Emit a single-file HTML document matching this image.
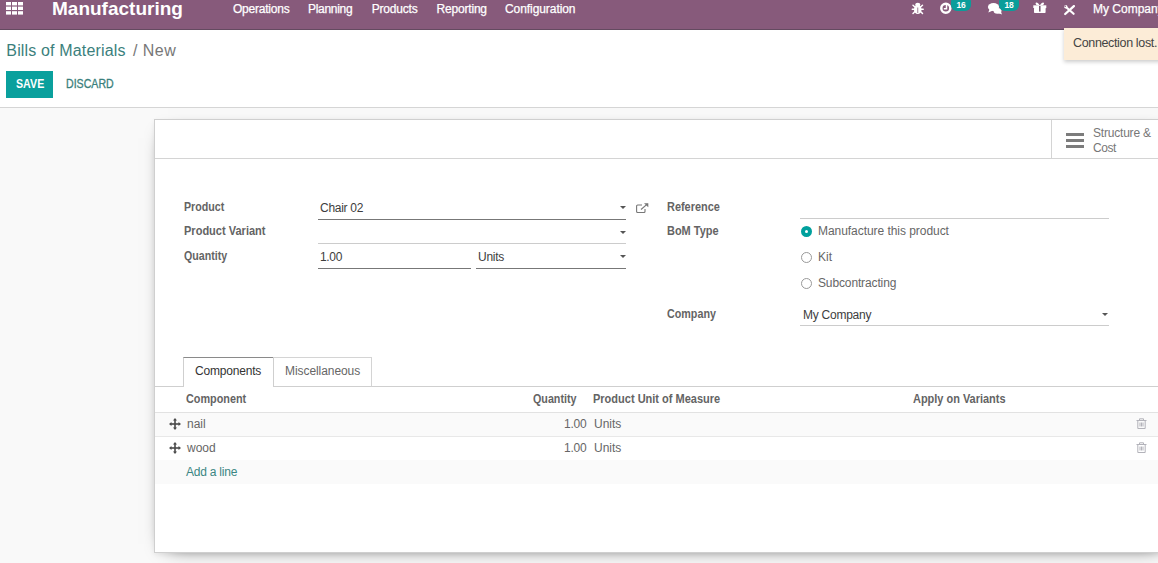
<!DOCTYPE html>
<html><head><meta charset="utf-8">
<style>
*{box-sizing:border-box;margin:0;padding:0}
html,body{width:1158px;height:563px;overflow:hidden;background:#f9f9f9;font-family:"Liberation Sans",sans-serif;color:#4c4c4c;font-size:12px}
.abs{position:absolute;white-space:nowrap}
#nav{position:absolute;left:0;top:0;width:1158px;height:30px;background:#875a7b;overflow:hidden;border-bottom:1px solid #644a60}
#nav .t{position:absolute;color:#fff;white-space:nowrap;font-size:12px;top:1px;line-height:16px;-webkit-text-stroke:0.25px #fff}
#cp{position:absolute;left:0;top:30px;width:1158px;height:78px;background:#fff;border-bottom:1px solid #d5d5d5}
#sheet{position:absolute;left:154px;top:119px;width:1020px;height:434px;background:#fff;border:1px solid #cfcfcf;box-shadow:0 5px 20px -14px #000,0 2px 5px rgba(0,0,0,.06)}
.lbl{position:absolute;font-weight:bold;color:#646464;font-size:12px;white-space:nowrap;line-height:14px}
.val{position:absolute;color:#3d3d3d;font-size:12px;white-space:nowrap;line-height:14px}
.ul{position:absolute;height:1px;background:#777}
.ul.l{background:#ccc}
.caret{position:absolute;width:0;height:0;border-left:3px solid transparent;border-right:3px solid transparent;border-top:3px solid #555}
.radio{position:absolute;width:11px;height:11px;border-radius:50%;border:1px solid #999;background:#fff}
.radio.on{border:4px solid #00a09d}
.badge{position:absolute;top:-4px;height:15px;border-radius:6px;background:#0a9d9a;color:#fff;font-size:8.5px;font-weight:bold;text-align:center;line-height:19px;letter-spacing:-0.2px}
</style>
<style id="fit">
#t_manu{}
#t_op{letter-spacing:-0.22px;}
#t_pl{letter-spacing:-0.30px;}
#t_pr{letter-spacing:-0.20px;margin-left:0.7px;}
#t_re{letter-spacing:-0.20px;margin-left:0.6px;}
#t_co{letter-spacing:-0.07px;}
#t_bom{letter-spacing:0.16px;margin-left:-0.7px;}
#t_new{letter-spacing:0.45px;}
#t_save{transform:scaleX(0.890);transform-origin:0 0;margin-left:0.5px;}
#t_disc{transform:scaleX(0.883);transform-origin:0 0;}
#t_struct{letter-spacing:-0.20px;}
#t_cost{letter-spacing:-0.47px;}
#l_prod{transform:scaleX(0.889);transform-origin:0 0;margin-left:0.7px;}
#l_pv{transform:scaleX(0.919);transform-origin:0 0;margin-left:0.7px;}
#l_qty{transform:scaleX(0.888);transform-origin:0 0;margin-left:0.7px;}
#v_chair{letter-spacing:-0.29px;}
#v_q1{letter-spacing:-0.35px;}
#v_units{letter-spacing:-0.28px;}
#l_ref{transform:scaleX(0.910);transform-origin:0 0;margin-left:0.6px;}
#l_bom{transform:scaleX(0.914);transform-origin:0 0;margin-left:0.6px;}
#v_r1{letter-spacing:-0.05px;}
#v_r2{}
#v_r3{letter-spacing:-0.13px;}
#l_comp{transform:scaleX(0.895);transform-origin:0 0;margin-left:0.8px;}
#v_myc{letter-spacing:-0.25px;}
#t_tab1{letter-spacing:-0.19px;}
#t_tab2{letter-spacing:-0.07px;}
#h_comp{transform:scaleX(0.903);transform-origin:0 0;}
#h_qty{transform:scaleX(0.894);transform-origin:0 0;}
#h_uom{transform:scaleX(0.917);transform-origin:0 0;}
#h_aov{transform:scaleX(0.913);transform-origin:0 0;}
#c_nail{}
#c_wood{}
#c_q1{letter-spacing:-0.25px;}
#c_q2{letter-spacing:-0.25px;}
#c_u1{}
#c_u2{}
#c_add{letter-spacing:-0.22px;}
#t_conn{letter-spacing:-0.35px;}
</style></head><body>
<div id="nav">
 <svg style="position:absolute;left:6px;top:2px" width="17" height="13" viewBox="0 0 17 13"><g fill="#fff"><rect x="0" y="0" width="5" height="3.4"/><rect x="6" y="0" width="5" height="3.4"/><rect x="12" y="0" width="5" height="3.4"/><rect x="0" y="4.6" width="5" height="3.4"/><rect x="6" y="4.6" width="5" height="3.4"/><rect x="12" y="4.6" width="5" height="3.4"/><rect x="0" y="9.2" width="5" height="3.4"/><rect x="6" y="9.2" width="5" height="3.4"/><rect x="12" y="9.2" width="5" height="3.4"/></g></svg>
 <div id="t_manu" class="abs" style="left:52px;top:-2px;font-size:19px;font-weight:bold;color:#fff">Manufacturing</div>
 <div id="t_op" class="t" style="left:233px">Operations</div>
 <div id="t_pl" class="t" style="left:308px">Planning</div>
 <div id="t_pr" class="t" style="left:371px">Products</div>
 <div id="t_re" class="t" style="left:436px">Reporting</div>
 <div id="t_co" class="t" style="left:505px">Configuration</div>
 <!-- systray icons -->
 <svg style="position:absolute;left:911px;top:2px" width="14" height="13" viewBox="0 0 14 13"><g stroke="#fff" stroke-width="1.5" fill="none" stroke-linecap="round"><path d="M1.300 7.200H12.200M2 3.300L4.500 5.500M11.500 3.300L9 5.500M2 11.500L4.500 9M11.500 11.500L9 9"/></g><g fill="#fff"><ellipse cx="6.750" cy="7.500" rx="3.800" ry="4.600"/><ellipse cx="6.750" cy="2.800" rx="2.600" ry="2"/></g><path d="M6.750 5.500V11" stroke="#875a7b" stroke-width="0.800"/></svg>
 <svg style="position:absolute;left:939px;top:2px" width="14" height="13" viewBox="0 0 14 13"><circle cx="6.800" cy="6.300" r="4.500" fill="none" stroke="#fff" stroke-width="2.500"/><path d="M7.500 3v3.800H4.800" fill="none" stroke="#fff" stroke-width="1.500"/></svg>
 <div class="badge" style="left:951px;width:20px">16</div>
 <svg style="position:absolute;left:987px;top:2px" width="16" height="13" viewBox="0 0 16 13"><g fill="#fff"><ellipse cx="6.500" cy="5" rx="5.600" ry="4"/><path d="M1.300 10.600L2.800 6.500L6 8.500Z"/><ellipse cx="10.500" cy="8.800" rx="4" ry="2.900"/><path d="M15 12.500L13.700 9L11 11Z"/></g></svg>
 <div class="badge" style="left:999px;width:20px">18</div>
 <svg style="position:absolute;left:1033px;top:2px" width="14" height="12" viewBox="0 0 14 12"><g fill="#fff"><rect x="0.300" y="3.300" width="13" height="2.700"/><rect x="1" y="5.500" width="11.600" height="5.500" rx="0.800"/><path d="M6.800 3.600C5 -0.200 2.300 0 2.600 1.700S5.500 3.600 6.800 3.600C8.600 -0.200 11.300 0 11 1.700S8.100 3.600 6.800 3.600Z"/></g><rect x="6.100" y="4" width="1.400" height="5.600" fill="#6b4763"/></svg>
 <svg style="position:absolute;left:1063px;top:4px" width="13" height="12" viewBox="0 0 13 12"><g stroke="#fff" fill="none" stroke-linecap="round"><path d="M2.200 10L10.600 2.400" stroke-width="2.300"/><path d="M3.500 3.500L10.600 9.800" stroke-width="2.200"/></g><circle cx="2.800" cy="2.800" r="1.700" fill="#fff"/><circle cx="2.200" cy="2.200" r="0.800" fill="#875a7b"/><circle cx="11" cy="2" r="1" fill="#fff"/></svg>
 <div id="t_myc" class="t" style="left:1093px;letter-spacing:0px">My Company</div>
</div>
<div id="cp">
 <div id="t_bom" class="abs" style="left:7px;top:11px;font-size:16px;line-height:20px;color:#3b7f7c">Bills of Materials</div>
 <div id="t_new" class="abs" style="left:133px;top:11px;font-size:16px;line-height:20px;color:#777">/ New</div>
 <div class="abs" style="left:6px;top:41px;width:47px;height:27px;background:#0aa09d"></div>
 <div id="t_save" class="abs" style="left:15px;top:41px;color:#fff;font-weight:bold;font-size:12px;line-height:27px">SAVE</div>
 <div id="t_disc" class="abs" style="left:66px;top:41px;color:#3a7f7c;font-size:12px;line-height:27px;-webkit-text-stroke:0.3px #3a7f7c">DISCARD</div>
</div>
<!-- notification -->
<div class="abs" style="left:1064px;top:28px;width:110px;height:32px;background:#fcecd7;box-shadow:0 2px 4px rgba(0,0,0,.2)"></div>
<div id="t_conn" class="abs" style="left:1073px;top:36px;font-size:12.5px;line-height:14px;color:#444">Connection lost.</div>

<div id="sheet"></div>
<!-- button box -->
<div class="abs" style="left:155px;top:158px;width:1003px;height:1px;background:#d4d4d4"></div>
<div class="abs" style="left:1051px;top:120px;width:1px;height:38px;background:#d4d4d4"></div>
<div class="abs" style="left:1066px;top:133px;width:18px;height:3px;background:#7c7c7c"></div>
<div class="abs" style="left:1066px;top:139px;width:18px;height:3px;background:#7c7c7c"></div>
<div class="abs" style="left:1066px;top:145px;width:18px;height:3px;background:#7c7c7c"></div>
<div id="t_struct" class="abs" style="left:1093px;top:126px;font-size:12px;line-height:14px;color:#777">Structure &amp;</div>
<div id="t_cost" class="abs" style="left:1093px;top:141px;font-size:12px;line-height:14px;color:#777">Cost</div>

<!-- left group -->
<div id="l_prod" class="lbl" style="left:183px;top:200px">Product</div>
<div id="l_pv" class="lbl" style="left:183px;top:224px">Product Variant</div>
<div id="l_qty" class="lbl" style="left:183px;top:249px">Quantity</div>
<div id="v_chair" class="val" style="left:320px;top:201px">Chair 02</div>
<div class="ul" style="left:318px;top:219px;width:308px"></div>
<div class="caret" style="left:620px;top:206px"></div>
<svg style="position:absolute;left:636px;top:203px" width="13" height="10" viewBox="0 0 13 10"><g fill="none" stroke="#777" stroke-width="1.100"><path d="M9 6v2.500a1 1 0 0 1-1 1H1.600a1 1 0 0 1-1-1V3a1 1 0 0 1 1-1H6"/><path d="M5 6.500L11.500 0.800"/></g><path d="M8 0.300h4.300v4z" fill="#777"/></svg>
<div class="ul l" style="left:318px;top:243px;width:308px"></div>
<div class="caret" style="left:620px;top:231px"></div>
<div id="v_q1" class="val" style="left:320px;top:250px">1.00</div>
<div class="ul" style="left:318px;top:268px;width:153px"></div>
<div id="v_units" class="val" style="left:478px;top:250px">Units</div>
<div class="ul" style="left:476px;top:268px;width:150px"></div>
<div class="caret" style="left:620px;top:255px"></div>

<!-- right group -->
<div id="l_ref" class="lbl" style="left:666px;top:200px">Reference</div>
<div class="ul l" style="left:800px;top:218px;width:309px"></div>
<div id="l_bom" class="lbl" style="left:666px;top:224px">BoM Type</div>
<div class="radio on" style="left:801px;top:226px"></div>
<div id="v_r1" class="val" style="left:818px;top:224px;color:#666">Manufacture this product</div>
<div class="radio" style="left:801px;top:252px"></div>
<div id="v_r2" class="val" style="left:818px;top:250px;color:#666">Kit</div>
<div class="radio" style="left:801px;top:278px"></div>
<div id="v_r3" class="val" style="left:818px;top:276px;color:#666">Subcontracting</div>
<div id="l_comp" class="lbl" style="left:666px;top:307px">Company</div>
<div id="v_myc" class="val" style="left:803px;top:308px">My Company</div>
<div class="ul l" style="left:800px;top:325px;width:309px"></div>
<div class="caret" style="left:1102px;top:313px"></div>

<!-- tabs -->
<div class="abs" style="left:155px;top:386px;width:1003px;height:1px;background:#cfcfcf"></div>
<div class="abs" style="left:183px;top:357px;width:91px;height:30px;background:#fff;border:1px solid #cfcfcf;border-top-color:#8a8a8a;border-bottom:0"></div>
<div class="abs" style="left:273px;top:357px;width:99px;height:30px;background:#fff;border:1px solid #d4d4d4;border-left-color:#cfcfcf;border-bottom-color:#cfcfcf"></div>
<div id="t_tab1" class="abs" style="left:195px;top:364px;font-size:12px;line-height:14px;color:#333">Components</div>
<div id="t_tab2" class="abs" style="left:285px;top:364px;font-size:12px;line-height:14px;color:#666">Miscellaneous</div>

<!-- table -->
<div id="h_comp" class="lbl" style="left:186px;top:392px">Component</div>
<div id="h_qty" class="lbl" style="left:533px;top:392px">Quantity</div>
<div id="h_uom" class="lbl" style="left:593px;top:392px">Product Unit of Measure</div>
<div id="h_aov" class="lbl" style="left:913px;top:392px">Apply on Variants</div>
<div class="abs" style="left:155px;top:412px;width:1003px;height:24px;background:#fafafa;border-top:1px solid #e2e2e2"></div>
<div class="abs" style="left:155px;top:436px;width:1003px;height:1px;background:#e8e8e8"></div>
<div class="abs" style="left:155px;top:460px;width:1003px;height:24px;background:#fafafa"></div>
<svg class="mv" style="position:absolute;left:169px;top:418px" width="12" height="12" viewBox="0 0 12 12"><g fill="#4a4a4a"><rect x="5.200" y="2" width="1.600" height="8"/><rect x="2" y="5.200" width="8" height="1.600"/><path d="M6 0L8 2.500H4zM6 12L8 9.500H4zM0 6L2.500 4V8zM12 6L9.500 4V8z"/></g></svg>
<svg class="mv" style="position:absolute;left:169px;top:442px" width="12" height="12" viewBox="0 0 12 12"><g fill="#4a4a4a"><rect x="5.200" y="2" width="1.600" height="8"/><rect x="2" y="5.200" width="8" height="1.600"/><path d="M6 0L8 2.500H4zM6 12L8 9.500H4zM0 6L2.500 4V8zM12 6L9.500 4V8z"/></g></svg>
<div id="c_nail" class="val" style="left:187px;top:417px;color:#666">nail</div>
<div id="c_wood" class="val" style="left:187px;top:441px;color:#666">wood</div>
<div id="c_q1" class="val" style="left:564px;top:417px;color:#666">1.00</div>
<div id="c_q2" class="val" style="left:564px;top:441px;color:#666">1.00</div>
<div id="c_u1" class="val" style="left:594px;top:417px;color:#666">Units</div>
<div id="c_u2" class="val" style="left:594px;top:441px;color:#666">Units</div>
<div id="c_add" class="val" style="left:186px;top:465px;color:#3b8683">Add a line</div>
<svg style="position:absolute;left:1136px;top:418px" width="11" height="11" viewBox="0 0 11 11"><g fill="none" stroke="#b3b3ba" stroke-width="1"><path d="M0.500 2.500h10M3.500 2.300V0.800h4v1.500M1.800 2.500v8h7.400v-8M4 4.500v4M5.500 4.500v4M7 4.500v4"/></g></svg>
<svg style="position:absolute;left:1136px;top:442px" width="11" height="11" viewBox="0 0 11 11"><g fill="none" stroke="#b3b3ba" stroke-width="1"><path d="M0.500 2.500h10M3.500 2.300V0.800h4v1.500M1.800 2.500v8h7.400v-8M4 4.500v4M5.500 4.500v4M7 4.500v4"/></g></svg>
</body></html>
